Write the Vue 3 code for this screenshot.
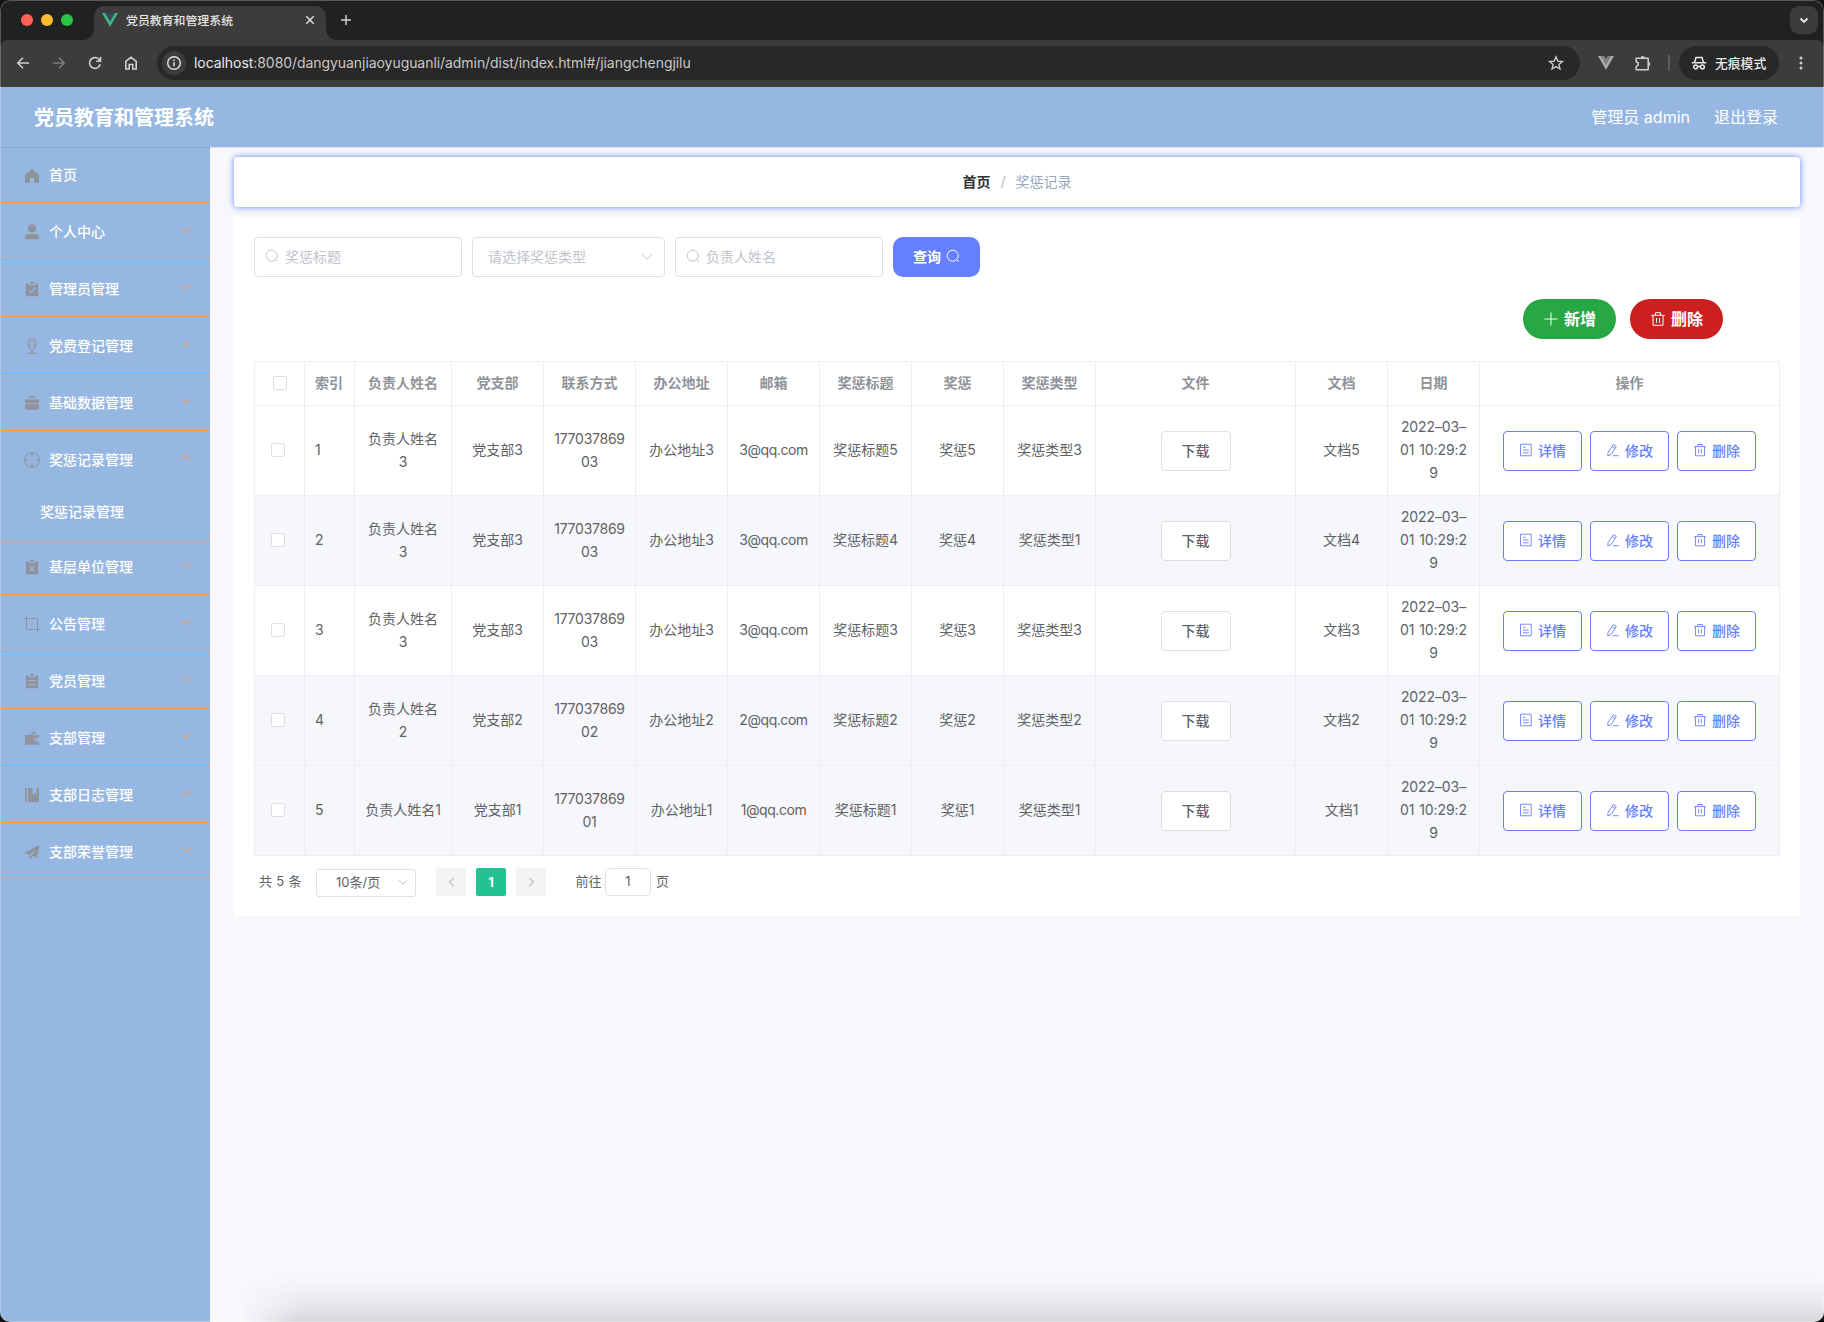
<script setup>
const menu = [
  { text: '首页', icon: 'home', leaf: true },
  { text: '个人中心', icon: 'user' },
  { text: '管理员管理', icon: 'check' },
  { text: '党费登记管理', icon: 'mic' },
  { text: '基础数据管理', icon: 'case' },
  { text: '奖惩记录管理', icon: 'aim', open: true, child: '奖惩记录管理' },
  { text: '基层单位管理', icon: 'cross' },
  { text: '公告管理', icon: 'crop' },
  { text: '党员管理', icon: 'order' },
  { text: '支部管理', icon: 'wallet' },
  { text: '支部日志管理', icon: 'book' },
  { text: '支部荣誉管理', icon: 'plane' },
]

const heads = ['负责人姓名', '党支部', '联系方式', '办公地址', '邮箱', '奖惩标题', '奖惩', '奖惩类型', '文件', '文档', '日期', '操作']

const source = [
  { id: 1, who: 3, n: 5, type: 3 },
  { id: 2, who: 3, n: 4, type: 1 },
  { id: 3, who: 3, n: 3, type: 3 },
  { id: 4, who: 2, n: 2, type: 2 },
  { id: 5, who: 1, n: 1, type: 1 },
]
const rows = source.map((r) => ({
  id: r.id,
  tinted: r.id % 2 === 0 || r.id === 5,
  cells: [
    { lines: r.who === 1 ? ['负责人姓名1'] : ['负责人姓名', String(r.who)] },
    { lines: ['党支部' + r.who] },
    { lines: ['177037869', '0' + r.who], kind: 'phone' },
    { lines: ['办公地址' + r.who] },
    { lines: [r.who + '@qq.com'], kind: 'mail' },
    { lines: ['奖惩标题' + r.n] },
    { lines: ['奖惩' + r.n] },
    { lines: ['奖惩类型' + r.type] },
  ],
  doc: '文档' + r.n,
}))
const dateLines = ['2022–03–', '01 10:29:2', '9']
</script>

<template>
  <div class="window">
    <div class="tabstrip">
      <div class="lights"><i class="red"></i><i class="yellow"></i><i class="green"></i></div>
      <div class="tab">
        <svg class="fav" width="16" height="14" viewBox="0 0 16 14"><path d="M0 0h3.2L8 8.3 12.8 0H16L8 13.8z" fill="#41b883" /><path d="M3.2 0H6.2L8 3.1 9.8 0h3L8 8.3z" fill="#35495e" /></svg>
        <span class="tab-title">党员教育和管理系统</span>
        <svg width="10" height="10" viewBox="0 0 10 10"><path d="M1.3 1.3l7.4 7.4M8.7 1.3L1.3 8.7" stroke="#dcdcdc" stroke-width="1.5" /></svg>
      </div>
      <svg class="plus" width="12" height="12" viewBox="0 0 12 12"><path d="M6 1v10M1 6h10" stroke="#d0d0d0" stroke-width="1.5" /></svg>
      <div class="tab-menu"><svg width="10" height="7" viewBox="0 0 10 7"><path d="M1.5 1.5L5 5l3.5-3.5" fill="none" stroke="#e8e8e8" stroke-width="1.8" /></svg></div>
    </div>
    <div class="toolbar">
      <div class="nav">
        <svg viewBox="0 0 16 16"><path d="M14 8H3M8 2.8L2.8 8 8 13.2" /></svg>
        <svg viewBox="0 0 16 16" class="dim"><path d="M2 8h11M8 2.8L13.2 8 8 13.2" /></svg>
        <svg viewBox="0 0 16 16"><path d="M13.2 9.2A5.4 5.4 0 1 1 12.4 4.9L13.5 6M13.5 1.8V6.2H9.2" /></svg>
        <svg viewBox="0 0 16 16"><path d="M2.8 14V6.5L8 2.2l5.200 4.300V14H9.8V9.5H6.2V14z" /></svg>
      </div>
      <div class="omnibox">
        <div class="info"><svg width="16" height="16" viewBox="0 0 16 16" fill="none" stroke="#e0e0e0" stroke-width="1.5"><circle cx="8" cy="8" r="6.3" /><path d="M8 7.2v4M8 4.500v1.600" /></svg></div>
        <span class="url"><b>localhost</b>:8080/dangyuanjiaoyuguanli/admin/dist/index.html#/jiangchengjilu</span>
        <svg class="star" width="16" height="16" viewBox="0 0 16 16"><path d="M8 1.800l1.800 4.300 4.600.4-3.500 3 1.100 4.500L8 11.600 4 14l1.100-4.500-3.500-3 4.600-.4z" fill="none" stroke="#d0d0d0" stroke-width="1.3" /></svg>
      </div>
      <svg class="vue" width="16" height="14" viewBox="0 0 16 14"><path d="M0 0h3.2L8 8.3 12.8 0H16L8 13.8z" fill="#aaa" /><path d="M3.2 0H6.2L8 3.1 9.8 0h3L8 8.3z" fill="#858585" /></svg>
      <svg class="puzzle" width="18" height="18" viewBox="0 0 18 18"><path d="M2.2 4.200H14.200V15.800H2.200V12.200a2.100 2.100 0 0 0 0-4.200z" fill="none" stroke="#cfcfcf" stroke-width="1.5" stroke-linejoin="round" /><path d="M6.700 4a2 2 0 0 1 4 0zM14.300 8a2 2 0 0 1 0 4z" fill="#cfcfcf" /></svg>
      <span class="divider"></span>
      <div class="incognito">
        <svg width="16" height="16" viewBox="0 0 16 16" fill="none" stroke="#e8e8e8" stroke-width="1.5"><path d="M.8 7.800h14.400M3.500 7.500L5 2.500h6l1.500 5" /><circle cx="4.600" cy="12" r="1.900" /><circle cx="11.400" cy="12" r="1.900" /><path d="M6.500 11.500h3" /></svg>
        <span>无痕模式</span>
      </div>
      <svg class="dots" width="4" height="14" viewBox="0 0 4 14" fill="#d0d0d0"><circle cx="2" cy="2" r="1.5" /><circle cx="2" cy="7" r="1.5" /><circle cx="2" cy="12" r="1.5" /></svg>
    </div>

    <header class="header">
      <h1>党员教育和管理系统</h1>
      <span class="admin">管理员 admin</span>
      <span class="logout">退出登录</span>
    </header>

    <div class="body">
      <aside class="sidebar">
        <div v-for="(m, i) in menu" :key="m.text" class="group" :class="{ first: i === 0, soft: i % 2 === 1 || m.open }">
          <div class="item">
            <svg class="micon" width="18" height="18" viewBox="0 0 18 18">
              <path v-if="m.icon === 'home'" d="M9 2.300l7 5.200V15.700H11V11H7v4.700H2V7.500z" />
              <template v-else-if="m.icon === 'user'"><circle cx="9" cy="5.500" r="4" /><path d="M2 16.300v-1.500a4 4 0 0 1 4-4h6a4 4 0 0 1 4 4v1.500z" /></template>
              <template v-else-if="m.icon === 'check'"><path d="M3 3.200h2.500V5h7V3.200H15V16.300H3z" /><path d="M7 1.800h4v2H7z" /><path d="M5.500 10l2.500 2.500 4.700-5" class="cut" /></template>
              <template v-else-if="m.icon === 'mic'"><rect x="5" y="1.500" width="8" height="11" rx="3.500" class="line" /><path d="M6 4.500h2.300M6 7h2.300M6 9.500h2.300M9.700 4.500H12M9.700 7H12M9.700 9.500H12M9 12.500V16M4.500 16.300h9" class="line" /></template>
              <template v-else-if="m.icon === 'case'"><path d="M2 5.500h14v3.700H2zM2 10.300h14v5.500H2z" /><path d="M6.500 5V2.700h5V5" class="line" /></template>
              <template v-else-if="m.icon === 'aim'"><circle cx="9" cy="9" r="7.300" class="line" /><path d="M9 1.500v4.300M9 12.200v4.300M1.500 9h4.300M12.200 9h4.300" class="line" /></template>
              <template v-else-if="m.icon === 'cross'"><path d="M3 3.200h2.500V5h7V3.200H15V16.300H3z" /><path d="M7 1.800h4v2H7z" /><path d="M6.300 7.800l5.400 5.400M11.700 7.800l-5.400 5.400" class="cut" /></template>
              <path v-else-if="m.icon === 'crop'" d="M.5 3.500H14.500V17.500M3.500 .5V14.500H17.500" class="line" />
              <template v-else-if="m.icon === 'order'"><path d="M3 3.200h2.500V5h7V3.200H15V16.300H3z" /><path d="M7 1.800h4v2H7z" /><path d="M5.300 8.500h7.400M5.300 12.500h7.400" class="cut" /></template>
              <template v-else-if="m.icon === 'wallet'"><path d="M2 6h14v2.500h-3a2 2 0 0 0 0 4.200h3v3H2z" /><path d="M7.500 5L11 2.200 13.500 5z" /><circle cx="12.800" cy="10.600" r=".9" /></template>
              <path v-else-if="m.icon === 'book'" d="M2 2h1.800v14H2zM5 2h4.500v7l2-1.700 2 1.700V2H16v14H5z" />
              <path v-else d="M1.500 9.800L16.300 2 14 15l-4-1.900L6.700 16.500 6 11.800zM7 11.900l.4 2.300L13.500 6z" fill-rule="evenodd" />
            </svg>
            <span class="mtext">{{ m.text }}</span>
            <svg v-if="!m.leaf" class="arrow" :class="{ up: m.open }" width="10" height="6" viewBox="0 0 10 6"><path d="M.8.8L5 4.900 9.200.8" /></svg>
          </div>
          <div v-if="m.child" class="sub">{{ m.child }}</div>
        </div>
      </aside>

      <main class="main">
        <nav class="crumb"><b>首页</b><i>/</i><span>奖惩记录</span></nav>
        <section class="card">
          <div class="filters">
            <div class="input"><svg width="14" height="14" viewBox="0 0 14 14"><circle cx="6.700" cy="6.700" r="5.500" /><path d="M10.600 10.600l2.100 2.100" /></svg>奖惩标题</div>
            <div class="select">请选择奖惩类型<svg width="12" height="8" viewBox="0 0 12 8"><path d="M1 1.200l5 5 5-5" /></svg></div>
            <div class="input"><svg width="14" height="14" viewBox="0 0 14 14"><circle cx="6.700" cy="6.700" r="5.500" /><path d="M10.600 10.600l2.100 2.100" /></svg>负责人姓名</div>
            <button class="query">查询<svg width="14" height="14" viewBox="0 0 14 14"><circle cx="6.700" cy="6.700" r="5.500" /><path d="M10.600 10.600l2.100 2.100" /></svg></button>
          </div>
          <div class="actions">
            <button class="add"><svg width="16" height="16" viewBox="0 0 16 16"><path d="M8 1.500v13M1.500 8h13" /></svg>新增</button>
            <button class="del"><svg width="16" height="16" viewBox="0 0 16 16"><path d="M1.300 4.300h13.400M5.500 4V1.700h5V4M3 4.500v9.800h10V4.500M6.500 7v4.800M9.500 7v4.800" /></svg>删除</button>
          </div>

          <div class="table">
            <div class="tr th">
              <div class="td ck"><span class="box"></span></div>
              <div class="td idx">索引</div>
              <div v-for="h in heads" :key="h" class="td">{{ h }}</div>
            </div>
            <div v-for="r in rows" :key="r.id" class="tr" :class="{ tinted: r.tinted }">
              <div class="td ck"><span class="box"></span></div>
              <div class="td idx">{{ r.id }}</div>
              <div v-for="(c, i) in r.cells" :key="i" class="td" :class="c.kind"><span v-for="l in c.lines" :key="l">{{ l }}</span></div>
              <div class="td ops"><button class="load">下载</button></div>
              <div class="td"><span>{{ r.doc }}</span></div>
              <div class="td date"><span v-for="l in dateLines" :key="l">{{ l }}</span></div>
              <div class="td ops">
                <button><svg width="14" height="14" viewBox="0 0 14 14"><path d="M1.500 1.200h10.700v11.600H1.500zM4 4.300h2.500M4 7h5.800M4 9.800h5.800" /></svg>详情</button>
                <button><svg width="14" height="14" viewBox="0 0 14 14"><path d="M7.400 1.600l3 1.700-5.200 8.200-3.500 1.300.4-3.400zM6.300 3.600l2.900 1.700M7 12.700h5.700" /></svg>修改</button>
                <button><svg width="14" height="14" viewBox="0 0 14 14"><path d="M1 3.600h12M4.800 3.400V1.500h4.400v1.900M2.500 3.800v9h9v-9M5.600 6v4.300M8.400 6v4.300" /></svg>删除</button>
              </div>
            </div>
          </div>

          <div class="pager">
            <span class="total">共 5 条</span>
            <div class="size">10条/页<svg width="10" height="7" viewBox="0 0 10 7"><path d="M1 1.200l4 4 4-4" /></svg></div>
            <button class="pg"><svg width="7" height="10" viewBox="0 0 7 10"><path d="M5.700 1L1.500 5l4.200 4" /></svg></button>
            <button class="pg on">1</button>
            <button class="pg"><svg width="7" height="10" viewBox="0 0 7 10"><path d="M1.300 1l4.200 4-4.200 4" /></svg></button>
            <span class="goto">前往</span><div class="jump">1</div><span>页</span>
          </div>
        </section>
        <div class="shade"></div>
      </main>
    </div>
    <div class="edge"></div>
  </div>
</template>

<style>
body { background: #10130f; }
</style>
<style scoped>
* { box-sizing: border-box; }
.window {
  position: relative; width: 1824px; height: 1322px; display: flex; flex-direction: column;
  overflow: hidden; border-radius: 10px; background: #202221;
  font-family: Inter, "Noto Sans CJK SC", sans-serif; font-size: 14px; color: #606266;
}
.edge { position: absolute; inset: 0; border-radius: 10px; pointer-events: none; box-shadow: inset 0 0 0 1px rgba(255, 255, 255, .25); }
svg { display: block; flex: none; }
button { font: inherit; padding: 0; margin: 0; border: 0; display: flex; align-items: center; justify-content: center; flex: none; }
.tabstrip { height: 40px; display: flex; flex: none; padding: 6px 6px 0 21px; }
.lights { display: flex; gap: 8px; padding-top: 8px; width: 73px; }
.lights i { width: 12px; height: 12px; border-radius: 50%; }
.red { background: #ff5f57; }
.yellow { background: #febc2e; }
.green { background: #28c840; }
.tab { position: relative; width: 232px; height: 34px; background: #3c3c3c; border-radius: 10px 10px 0 0; display: flex; align-items: center; padding: 0 11px 6px 8px; }
.tab::before, .tab::after { content: ""; position: absolute; bottom: 0; width: 10px; height: 10px; }
.tab::before { left: -10px; background: radial-gradient(circle at 0 0, transparent 9.5px, #3c3c3c 10px); }
.tab::after { right: -10px; background: radial-gradient(circle at 100% 0, transparent 9.5px, #3c3c3c 10px); }
.tab-title { flex: 1; margin-left: 8px; padding-bottom: 2px; font-size: 11.9px; font-weight: 500; color: #e6e6e6; }
.plus { margin: 8px 0 0 14px; }
.tab-menu { margin-left: auto; width: 28px; height: 28px; border-radius: 9px; background: #3c3c3c; display: flex; align-items: center; justify-content: center; }
.toolbar { height: 47px; flex: none; background: #3c3c3c; border-radius: 8px 8px 0 0; display: flex; align-items: center; padding: 0 21px 1px 15px; }
.nav { display: flex; gap: 20px; width: 142px; }
.nav svg { width: 16px; height: 16px; fill: none; stroke: #cfcfcf; stroke-width: 1.6; }
.nav svg.dim { stroke: #7c7c7c; }
.omnibox { width: 1423px; height: 34px; border-radius: 17px; background: #282828; display: flex; align-items: center; padding: 0 16px 0 5px; flex: none; }
.info { width: 24px; height: 24px; border-radius: 50%; background: #3c3c3c; display: flex; align-items: center; justify-content: center; }
.url { margin-left: 8px; padding-bottom: 2px; flex: 1; font-size: 14px; letter-spacing: -.06px; color: #c7c7c7; white-space: nowrap; }
.url b { font-weight: 400; color: #e8e8e8; }
.vue { margin-left: 18px; }
.puzzle { margin-left: 20px; }
.divider { width: 2px; height: 16px; background: #5c5c5c; margin: 0 9px 0 16px; }
.incognito { width: 100px; height: 34px; flex: none; border-radius: 17px; background: #282828; display: flex; align-items: center; gap: 8px; padding-left: 12px; font-size: 12.8px; font-weight: 500; color: #e8e8e8; white-space: nowrap; }
.incognito span { padding-bottom: 2px; }
.dots { margin-left: auto; }
.header { height: 60px; flex: none; background: #96b7e2; color: #fff; display: flex; align-items: center; padding: 0 46px 2px 34px; }
h1 { margin: 0; font-size: 20px; font-weight: 700; flex: 1; }
.admin, .logout { font-size: 16px; }
.logout { margin-left: 24px; }
.body { flex: 1; display: flex; min-height: 0; }
.sidebar { width: 210px; background: #96b7e2; border-top: 1px solid #88a6cf; }
.group { border-bottom: 1px solid #ff9a36; }
.group.soft { border-bottom-color: #ec9e56; }
.item { height: 56px; display: flex; align-items: center; padding: 0 19px 0 23px; }
.first .item { height: 54px; }
.first .mtext { padding-bottom: 2px; }
.micon { fill: #909399; margin-top: 2px; }
.line { fill: none; stroke: #909399; stroke-width: 1; }
.cut { fill: none; stroke: #96b7e2; stroke-width: 1.2; }
.mtext { margin-left: 8px; flex: 1; padding-bottom: 1px; font-weight: 500; color: #fff; }
.arrow { margin-bottom: 3px; fill: none; stroke: #d99f74; stroke-width: 1.2; }
.arrow.up { transform: rotate(180deg); }
.sub { height: 50px; line-height: 49px; padding-left: 40px; font-weight: 500; color: #fff; }
.main { position: relative; flex: 1; background: #f6f8fb; border-top: 1px solid #dde3ec; padding: 9px 24px 0; }
.crumb { height: 50px; padding-bottom: 2px; background: #fff; border-radius: 4px; box-shadow: 0 0 6px #667fff; display: flex; align-items: center; justify-content: center; }
.crumb b { color: #303133; font-weight: 700; }
.crumb i { margin: 0 10px; color: #c0c4cc; font-style: normal; font-weight: 500; }
.crumb span { color: #97a8be; }
.card { margin-top: 10px; height: 699px; background: #fff; padding: 20px 20px 0; }
.filters { display: flex; gap: 10px; }
.input, .select { height: 40px; border: 1px solid #dcdfe6; border-radius: 4px; display: flex; align-items: center; color: #c0c4cc; }
.input { width: 208px; padding: 0 0 2px 10px; gap: 6px; }
.select { width: 193px; padding: 0 11px 2px 15px; justify-content: space-between; }
.select svg { margin-top: 2px; }
.filters svg, .size svg, .pg svg { fill: none; stroke: #c0c4cc; stroke-width: 1; }
.query { width: 87px; height: 40px; padding-bottom: 2px; border-radius: 10px; background: #667fff; color: #fff; font-weight: 700; gap: 5px; }
.filters .query svg { stroke: #fff; }
.actions { display: flex; justify-content: flex-end; gap: 14px; padding: 22px 57px 22px 0; }
.actions button { width: 93px; height: 40px; padding-bottom: 2px; border-radius: 20px; color: #fff; font-size: 16px; font-weight: 700; gap: 5px; }
.actions svg { margin-top: 2px; fill: none; stroke: #fff; stroke-width: 1; }
.add { background: #28a745; }
.del { background: #cc1f1f; }
.table { border: 1px solid #ebeef5; border-bottom: 0; border-right: 0; }
.tr { display: grid; grid-template-columns: 50px 50px 97px repeat(7, 92px) 200px 92px 92px 300px; height: 90px; }
.tr.tinted { background: #f5f7fb; }
.td { border-right: 1px solid #ebeef5; border-bottom: 1px solid #ebeef5; padding-bottom: 2px; display: flex; flex-direction: column; align-items: center; justify-content: center; line-height: 23px; white-space: nowrap; }
.tr.th { height: 44px; color: #909399; font-weight: 700; }
.td.idx { align-items: flex-start; padding-left: 10px; }
.phone { letter-spacing: -.25px; }
.mail { letter-spacing: -.45px; }
.date { letter-spacing: -.1px; word-spacing: 1px; }
.box { width: 14px; height: 14px; border: 1px solid #dcdfe6; border-radius: 2px; background: #fff; }
.td.ck { padding: 0 3px 1px 0; }
.th .td.ck { padding: 0 0 1px 1px; }
.td.ops { flex-direction: row; gap: 8px; padding: 1px 0 0; }
.ops button { width: 79px; height: 40px; padding-bottom: 2px; border: 1px solid #667fff; border-radius: 4px; background: #fff; color: #667fff; font-weight: 500; gap: 5px; }
.ops .load { width: 70px; border-color: #dcdfe6; color: #606266; }
.ops svg { fill: none; stroke: #667fff; stroke-width: .9; }
.pager { display: flex; height: 28px; margin-top: 12px; padding-left: 5px; font-size: 13px; line-height: 27px; white-space: nowrap; }
.total { width: 57px; word-spacing: .6px; }
.size { width: 100px; height: 28px; margin: 1px 20px 0 0; border: 1px solid #dcdfe6; border-radius: 3px; display: flex; align-items: center; justify-content: space-between; padding: 0 7px 1px 19px; }
.pg { width: 30px; height: 28px; margin-right: 10px; background: #f4f4f5; border-radius: 2px; }
.pg.on { background: #23c292; color: #fff; font-weight: 700; }
.pager .pg svg { stroke-width: 1.4; }
.goto { margin-left: 19.5px; width: 29.5px; }
.jump { width: 46px; height: 28px; line-height: 25px; border: 1px solid #dcdfe6; border-radius: 4px; text-align: center; margin-right: 5px; }
.shade { position: absolute; left: 30px; right: 0; bottom: 0; height: 46px; background: linear-gradient(to top, rgba(0, 0, 0, .13), rgba(0, 0, 0, .05) 45%, transparent); -webkit-mask-image: linear-gradient(to right, transparent, #000 60px); mask-image: linear-gradient(to right, transparent, #000 60px); }
</style>
